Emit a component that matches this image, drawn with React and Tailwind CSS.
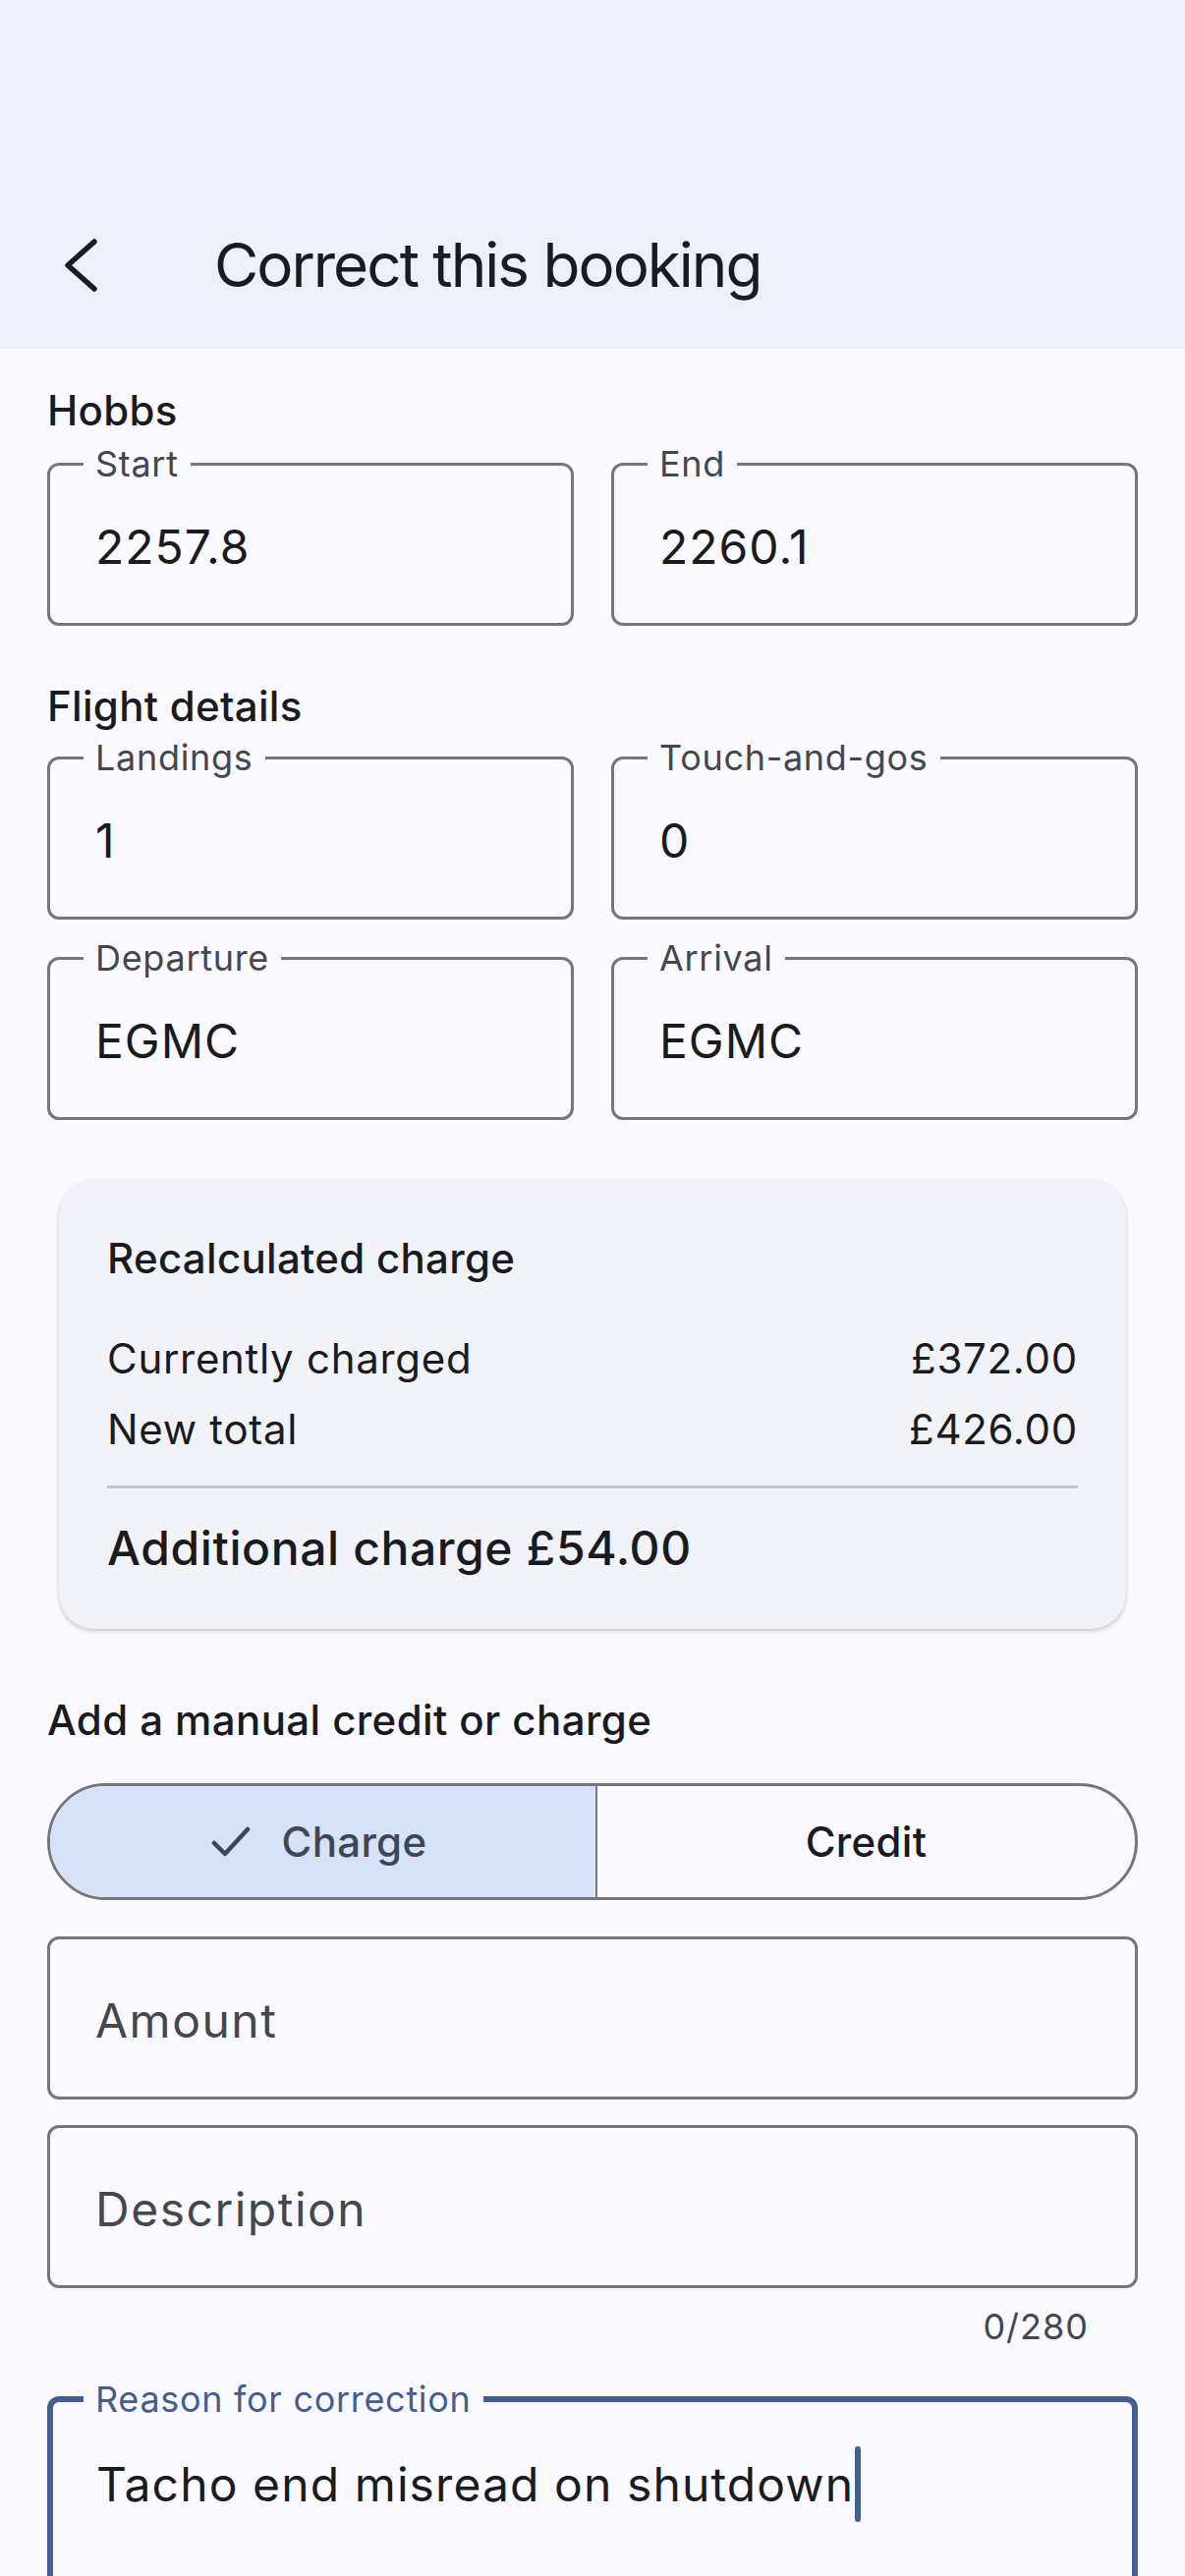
import React from "react";

function OutlinedField({ label, value, className = "" }) {
  return (
    <div
      className={`relative h-[166px] rounded-[12px] border-[3px] border-[#74777f] flex items-center pl-[46px] pt-[6px] ${className}`}
    >
      {label && (
        <span className="absolute left-[34px] top-[-21px] bg-[#f9f9ff] px-[12px] text-[36px] leading-[38px] tracking-[0.7px] text-[#44474e]">
          {label}
        </span>
      )}
      <span className="text-[48px] leading-[64px] tracking-[1px] text-[#1a1b20]">
        {value}
      </span>
    </div>
  );
}

function Placeholder({ text, className = "" }) {
  return (
    <div
      className={`h-[166px] rounded-[12px] border-[3px] border-[#74777f] flex items-center pl-[46px] pt-[6px] ${className}`}
    >
      <span className="text-[48px] leading-[64px] tracking-[1.5px] text-[#44474e]">
        {text}
      </span>
    </div>
  );
}

function Row({ left, right }) {
  return (
    <div className="flex justify-between text-[42px] leading-[60px] tracking-[0.7px] text-[#1a1b20]">
      <span>{left}</span>
      <span>{right}</span>
    </div>
  );
}

export default function App() {
  return (
    <div className="h-[2622px] w-[1206px] overflow-hidden bg-[#f9f9ff] font-['Inter',sans-serif]">
      {/* app bar */}
      <div className="h-[355px] bg-[#edf0f8] flex flex-col justify-end">
        <div className="h-[170px] flex items-center">
          <svg
            className="ml-[64px] w-[40px] h-[60px]"
            viewBox="0 0 40 60"
            fill="none"
            stroke="#1a1b20"
            strokeWidth="5.5"
            strokeLinecap="round"
            strokeLinejoin="round"
          >
            <polyline points="32,6 5,30 32,54" />
          </svg>
          <h1 className="ml-[114px] text-[62px] leading-[80px] tracking-[-2px] text-[#1a1b20]">
            Correct this booking
          </h1>
        </div>
      </div>

      <div className="px-[48px] pt-[33px]">
        {/* hobbs */}
        <p className="text-[42px] leading-[60px] font-medium tracking-[0.3px] text-[#1a1b20]">
          Hobbs
        </p>
        <div className="mt-[23px] grid grid-cols-2 gap-[38px]">
          <OutlinedField label="Start" value="2257.8" />
          <OutlinedField label="End" value="2260.1" />
        </div>

        {/* flight details */}
        <p className="mt-[52px] text-[42px] leading-[60px] font-medium tracking-[0.3px] text-[#1a1b20]">
          Flight details
        </p>
        <div className="mt-[21px] grid grid-cols-2 gap-x-[38px] gap-y-[38px]">
          <OutlinedField label="Landings" value="1" />
          <OutlinedField label="Touch-and-gos" value="0" />
          <OutlinedField label="Departure" value="EGMC" />
          <OutlinedField label="Arrival" value="EGMC" />
        </div>

        {/* recalculated charge card */}
        <div className="mx-[12px] mt-[61px] rounded-[36px] bg-[#f2f3f9] px-[49px] pt-[50px] pb-[50px] shadow-[0_3px_4px_rgba(0,0,0,0.14),0_0_3px_rgba(0,0,0,0.08)]">
          <p className="text-[42px] leading-[60px] font-medium tracking-[0.3px] text-[#1a1b20]">
            Recalculated charge
          </p>
          <div className="mt-[42px] flex flex-col gap-[12px]">
            <Row left="Currently charged" right="£372.00" />
            <Row left="New total" right="£426.00" />
          </div>
          <div className="mt-[27px] h-[3px] bg-[#c4c6cf]" />
          <p className="mt-[29px] text-[48px] leading-[64px] font-medium tracking-[0.6px] text-[#1a1b20]">
            Additional charge £54.00
          </p>
        </div>

        {/* manual credit / charge */}
        <p className="mt-[63px] text-[42px] leading-[60px] font-medium tracking-[0.4px] text-[#1a1b20]">
          Add a manual credit or charge
        </p>
        <div className="mt-[34px] h-[119px] rounded-full border-[3px] border-[#74777f] flex overflow-hidden">
          <div className="flex-1 bg-[#d8e2f6] border-r-[2px] border-[#74777f] flex items-center justify-center gap-[32px] pr-[8px]">
            <svg
              className="w-[40px] h-[32px]"
              viewBox="0 0 40 32"
              fill="none"
              stroke="#3e4759"
              strokeWidth="4.5"
              strokeLinecap="round"
              strokeLinejoin="round"
            >
              <polyline points="3,17 14,28 37,3" />
            </svg>
            <span className="text-[42px] leading-[60px] font-medium tracking-[0.3px] text-[#3e4759]">
              Charge
            </span>
          </div>
          <div className="flex-1 flex items-center justify-center">
            <span className="text-[42px] leading-[60px] font-medium tracking-[0.3px] text-[#1a1b20]">
              Credit
            </span>
          </div>
        </div>

        <Placeholder text="Amount" className="mt-[37px]" />
        <Placeholder text="Description" className="mt-[26px]" />
        <p className="mt-[15px] pr-[50px] text-right text-[36px] leading-[48px] tracking-[1px] text-[#44474e]">
          0/280
        </p>

        {/* reason for correction (focused) */}
        <div className="relative mt-[47px] h-[320px] rounded-[12px] border-[6px] border-[#415f91] pl-[44px] pt-[45px]">
          <span className="absolute left-[31px] top-[-22px] bg-[#f9f9ff] px-[12px] text-[36px] leading-[38px] tracking-[0.7px] text-[#415f91]">
            Reason for correction
          </span>
          <div className="flex items-center">
            <span className="text-[48px] leading-[64px] tracking-[1.1px] text-[#1a1b20]">
              Tacho end misread on shutdown
            </span>
            <span className="ml-[1px] w-[6px] h-[77px] rounded-full bg-[#415f91]" />
          </div>
        </div>
      </div>
    </div>
  );
}
